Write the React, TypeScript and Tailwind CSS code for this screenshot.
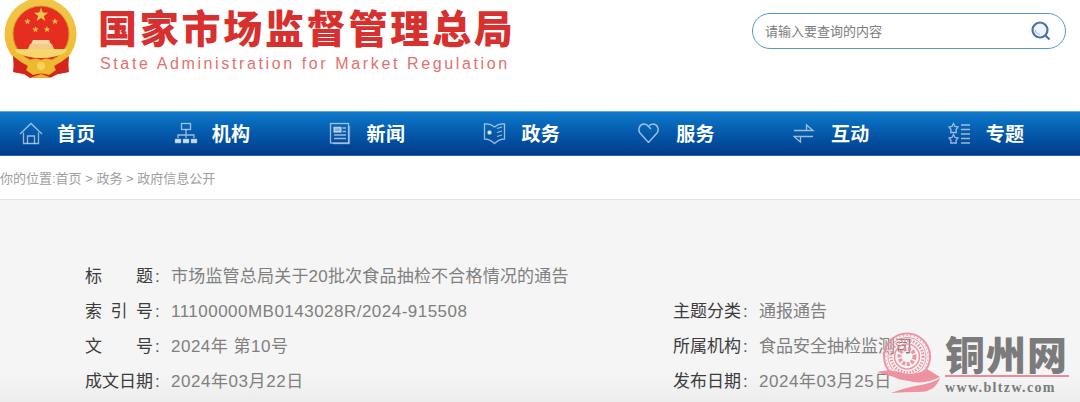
import React from "react";

const F = { fontFamily: '"Liberation Sans","Noto Sans CJK SC",sans-serif' };
const CJK = { fontFamily: '"Noto Sans CJK SC",sans-serif' };

function star(cx: number, cy: number, r: number) {
  const p: string[] = [];
  for (let i = 0; i < 10; i++) {
    const a = -Math.PI / 2 + (i * Math.PI) / 5;
    const q = i % 2 ? r * 0.4 : r;
    p.push(`${(cx + q * Math.cos(a)).toFixed(2)},${(cy + q * Math.sin(a)).toFixed(2)}`);
  }
  return p.join(" ");
}

function Emblem() {
  return (
    <svg width="82" height="82" viewBox="0 0 82 82" className="shrink-0 blur-[0.4px]">
      <defs>
        <linearGradient id="gold" x1="0" y1="0" x2="0" y2="1">
          <stop offset="0" stopColor="#f2c64a" />
          <stop offset="1" stopColor="#efb92e" />
        </linearGradient>
      </defs>
      <path d="M15 56 L13 72 L24 74 L30 78 L50 78 L58 74 L69 72 L67 56 L50 66 L30 66 Z" fill="#d4251c" />
      <circle cx="40.5" cy="34" r="36" fill="url(#gold)" />
      <circle cx="41" cy="34" r="28" fill="#e62e20" stroke="#c9962a" strokeWidth="1" />
      <polygon points={star(41, 15, 7.5)} fill="#eec64a" />
      <polygon points={star(27.5, 21.5, 3.4)} fill="#eec64a" />
      <polygon points={star(55, 21.5, 3.4)} fill="#eec64a" />
      <polygon points={star(35.5, 29.5, 3.4)} fill="#eec64a" />
      <polygon points={star(47, 29.5, 3.4)} fill="#eec64a" />
      <path d="M33 40 H49 L51 44 H31 Z" fill="#f5d9a0" />
      <path d="M30 44 H52 L54 49 H28 Z" fill="#f3c98b" />
      <path d="M15 49 H67 L66 52 Q56 58 41 58 Q26 58 16 52 Z" fill="#f6d76b" />
      <path d="M13 56 Q20 62 28 66 L27 71 L24 74 L14 72 Z" fill="#d4251c" />
      <path d="M69 56 Q62 62 54 66 L55 71 L58 74 L68 72 Z" fill="#d4251c" />
      <path d="M27 62 Q34 56 41 60 Q48 56 55 62 Q53 66 56 70 L49 75 Q41 72 33 75 L26 70 Q29 66 27 62 Z" fill="#eeb92f" />
      <circle cx="41" cy="66" r="4" fill="#f7d35a" />
      <path d="M30 78 L41 74 L52 78 Z" fill="#e9b030" />
    </svg>
  );
}

const s = { fill: "none", stroke: "#fff", strokeOpacity: 0.6, strokeWidth: 1.3 };

const icons: React.ReactNode[] = [
  <g {...s}><path d="M1 12 L12 1.5 L23 12" /><path d="M4.5 10.5 V21.5 H19.5 V10.5" /><path d="M8.5 21.5 V14 H15.5 V21.5" /></g>,
  <g {...s}><rect x="7.5" y="1.5" width="9" height="6" /><path d="M12 7.5 V13 M4 16 V13 H20 V16 M12 13 V16" /><path d="M1.5 17.5 H6.5 V20.5 H1.5 Z M9.5 17.5 H14.5 V20.5 H9.5 Z M17.5 17.5 H22.5 V20.5 H17.5 Z" fill="#fff" fillOpacity="0.75" /></g>,
  <g {...s}><rect x="1.5" y="1.5" width="18" height="19.5" /><path d="M5 5.5 H12 V10 H5 Z" fill="#fff" fillOpacity=".5" /><path d="M13.5 6 H17 M13.5 9.5 H17 M5 13 H17 M5 16.5 H17" /><path d="M20.5 4 V21.5 H4" strokeOpacity=".4" /></g>,
  <g {...s}><path d="M1.5 2 Q7 1 11.5 5 Q16 1 21.5 2 V17 Q16 17 11.5 21.5 Q7 17 1.5 17 Z" /><circle cx="6.5" cy="10.5" r="1.6" fill="#fff" /><path d="M14 6.5 L19 5 M14 10.5 L19 9 M14 14.5 L19 13" /></g>,
  <g {...s} strokeWidth={1.5}><path d="M10.5 20.5 L2 11 C-0.5 7.5 1.5 2 6 2 C8 2 9.5 3 10.5 4.5 L13 7 M10.5 4.5 C12 2.5 13.5 2 15 2 C19.5 2 21.5 7.5 19 11 L10.5 20.5" /></g>,
  <g {...s}><path d="M1 8.5 H20 L13.5 3 V8.5" /><path d="M20 14.5 H1 L7.5 20 V14.5" /></g>,
  <g {...s}><path d="M5.5 1.5 L7 4.5 L10 5 L8 7.5 L8.3 10.5 H2.7 L3 7.5 L1 5 L4 4.5 Z" /><path d="M5.5 12.5 L7 15.5 L10 16 L8 18.5 L8.3 21 H2.7 L3 18.5 L1 16 L4 15.5 Z" /><path d="M13 3 H22 M13 7.5 H22 M13 12 H22 M13 16.5 H22 M13 21 H22" /></g>,
];

const nav = ["首页", "机构", "新闻", "政务", "服务", "互动", "专题"];

function Row({ label, value, track }: { label: string[]; value: string; track: string }) {
  return (
    <div className="flex h-[35px] items-center">
      <span className="flex w-[68px] justify-between text-[#3c3c3c]">
        {label.map((c, i) => (
          <span key={i}>{c}</span>
        ))}
      </span>
      <span className="w-[18px] pl-[2px] text-[#555]">:</span>
      <span className={`whitespace-nowrap text-[#808080] ${track}`}>{value}</span>
    </div>
  );
}

function Watermark() {
  const dots = Array.from({ length: 36 }, (_, i) => i * 10);
  return (
    <div className="absolute left-[877px] top-[332px] h-[70px] w-[203px]">
      <svg width="70" height="64" viewBox="0 0 70 64" className="absolute left-0 top-0 opacity-90">
        <g fill="none" stroke="#ef8b9a">
          <circle cx="30" cy="24.5" r="23" strokeWidth="2" />
          <circle cx="30" cy="24.5" r="19" strokeWidth="1" />
          <circle cx="30" cy="24.5" r="16" strokeWidth="3" strokeDasharray="1.5 1.5" />
          <circle cx="30" cy="24.5" r="12.5" strokeWidth="1.5" />
          <circle cx="30" cy="24.5" r="7.5" strokeWidth="4" strokeDasharray="3 1.5" />
        </g>
        <g fill="#ef8b9a">
          {dots.map((d) => (
            <circle key={d} cx={30 + 21 * Math.cos((d * Math.PI) / 180)} cy={24.5 + 21 * Math.sin((d * Math.PI) / 180)} r="0.7" />
          ))}
        </g>
        <path d="M0 40 Q10 37 22 40 Q36 45 50 37 L63 45 Q50 52 36 50 Q16 45 0 40 Z" fill="#ee8798" />
        <path d="M14 61 Q30 55 44 53 Q56 51 63 46 Q58 60 42 60 Q28 60 14 61 Z" fill="#ee8798" />
      </svg>
      <div className="absolute left-[68px] top-0 flex w-[124px] flex-col">
        <div className="h-[43px] whitespace-nowrap text-[40px] font-black leading-[43px] tracking-[1px] text-[#7b7b7b]" style={CJK}>
          铜州网
        </div>
        <div className="h-[2px] bg-[#ee8a9c]" />
        <div className="mt-[1.5px] whitespace-nowrap text-[14px] font-bold leading-[18px] tracking-[1.35px] text-[#7b7b7b]" style={{ fontFamily: '"Liberation Serif",serif' }}>
          www.bltzw.com
        </div>
      </div>
    </div>
  );
}

export default function App() {
  return (
    <div className="relative h-[402px] w-[1080px] overflow-hidden bg-white" style={F}>
      <header className="flex h-[111px] items-start justify-between">
        <div className="flex">
          <Emblem />
          <div className="ml-[16px] flex flex-col pt-[4px]">
            <div className="whitespace-nowrap text-[39px] font-black leading-[44px] tracking-[2.75px] text-[#d8302e]" style={CJK}>
              国家市场监督管理总局
            </div>
            <div className="mt-[7px] whitespace-nowrap pl-[2px] text-[16px] leading-[18px] tracking-[2.62px] text-[#e3706e]">
              State Administration for Market Regulation
            </div>
          </div>
        </div>
        <div className="mr-[14px] mt-[13px] flex h-[36px] w-[314px] items-center justify-between rounded-[18px] border border-[#4f9ad8] pl-[12px] pr-[13px]">
          <span className="pt-[2px] text-[13px] text-[#7d7d7d]">请输入要查询的内容</span>
          <svg width="22" height="22" viewBox="0 0 22 22">
            <circle cx="10" cy="10" r="7.5" fill="#eef4fa" stroke="#4a71ac" strokeWidth="2.2" />
            <path d="M5.5 10 A4.5 4.5 0 0 0 10 14.5" fill="none" stroke="#a9c1dd" strokeWidth="1.2" />
            <path d="M15.5 15.5 L19.5 19.5" stroke="#4a71ac" strokeWidth="2.2" />
          </svg>
        </div>
      </header>

      <nav className="flex h-[45px] border-b border-t border-b-[#2a66a8] border-t-[#63a5da] bg-gradient-to-b from-[#0f79cb] to-[#023a8b] pl-[19px]">
        {nav.map((t, i) => (
          <div key={t} className="flex w-[154.8px] shrink-0 items-center">
            <svg width="24" height="23" viewBox="0 0 24 23" className="shrink-0">
              {icons[i]}
            </svg>
            <span className="ml-[14px] text-[19px] font-bold tracking-[0.3px] text-white" style={CJK}>
              {t}
            </span>
          </div>
        ))}
      </nav>

      <div className="flex h-[44px] items-center whitespace-pre border-b border-[#dfe3ee] pt-[3px] text-[13px] text-[#a0a0a0]">
        你的位置:首页 &gt; 政务 &gt; 政府信息公开
      </div>

      <main className="h-[202px] bg-gradient-to-b from-[#f5f5f5] from-85% to-[#ededed] pl-[85px] pt-[59px] text-[17px]">
        <Row label={["标", "题"]} value="市场监管总局关于20批次食品抽检不合格情况的通告" track="tracking-[0.2px]" />
        <div className="flex">
          <div className="w-[588px]">
            <Row label={["索", "引", "号"]} value="11100000MB0143028R/2024-915508" track="tracking-[0.48px]" />
            <Row label={["文", "号"]} value="2024年 第10号" track="tracking-[0.5px]" />
            <Row label={["成", "文", "日", "期"]} value="2024年03月22日" track="tracking-[0.55px]" />
          </div>
          <div>
            <Row label={["主", "题", "分", "类"]} value="通报通告" track="tracking-[0px]" />
            <Row label={["所", "属", "机", "构"]} value="食品安全抽检监测司" track="tracking-[0px]" />
            <Row label={["发", "布", "日", "期"]} value="2024年03月25日" track="tracking-[0.55px]" />
          </div>
        </div>
      </main>

      <Watermark />
    </div>
  );
}
